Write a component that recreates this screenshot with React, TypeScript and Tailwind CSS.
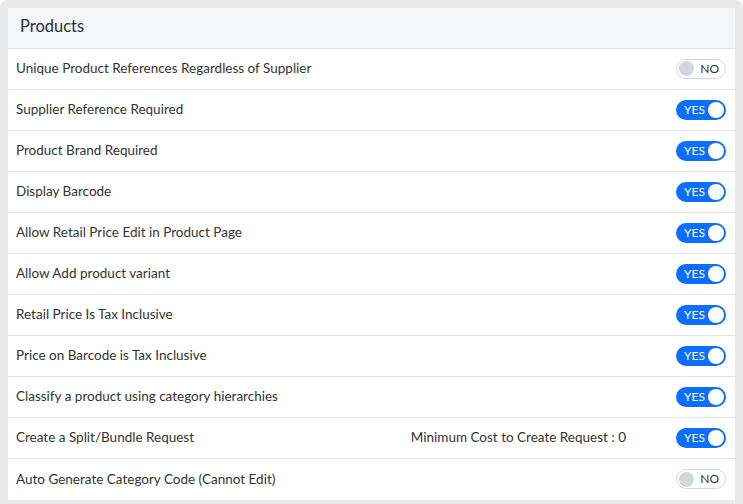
import React from "react";

const rows: { label: string; on: boolean; extra?: string }[] = [
  { label: "Unique Product References Regardless of Supplier", on: false },
  { label: "Supplier Reference Required", on: true },
  { label: "Product Brand Required", on: true },
  { label: "Display Barcode", on: true },
  { label: "Allow Retail Price Edit in Product Page", on: true },
  { label: "Allow Add product variant", on: true },
  { label: "Retail Price Is Tax Inclusive", on: true },
  { label: "Price on Barcode is Tax Inclusive", on: true },
  { label: "Classify a product using category hierarchies", on: true },
  { label: "Create a Split/Bundle Request", on: true, extra: "Minimum Cost to Create Request : 0" },
  { label: "Auto Generate Category Code (Cannot Edit)", on: false },
];

function Toggle({ on }: { on: boolean }) {
  if (on) {
    return (
      <div className="flex h-[20px] w-[50px] items-center justify-between rounded-full bg-[#0d6efd] pl-[8px] pr-[2px]">
        <span className="text-[12px] leading-none text-white">YES</span>
        <span className="h-[16px] w-[16px] rounded-full bg-white" />
      </div>
    );
  }
  return (
    <div className="flex h-[20px] w-[50px] items-center justify-between rounded-full border border-[#d6d8db] bg-white pl-[2px] pr-[6px]">
      <span className="h-[15px] w-[15px] rounded-full bg-[#d3d6da]" />
      <span className="text-[12px] leading-none text-[#333]">NO</span>
    </div>
  );
}

export default function App() {
  return (
    <div
      className="h-[504px] w-[743px] overflow-hidden bg-white"
      style={{ fontFamily: "Lato, 'Noto Sans', sans-serif" }}
    >
      <div className="h-[512px] rounded-[8px] bg-[#e9e9ea] px-[8px] pt-[8px]">
        <div className="flex flex-col overflow-hidden rounded-t-[3px] bg-white">
          <div className="flex h-[41px] items-center border-b border-[#dee0e3] bg-[#f5f6f8] px-[12px] pb-[3px] text-[16.5px] text-[#2b2f36]">
            Products
          </div>
          {rows.map((r, i) => (
            <div
              key={i}
              className={`flex h-[41px] items-center pl-[8px] pr-[9px] pb-[1px] ${i < rows.length - 1 ? "border-b border-[#e3e4e7]" : ""}`}
            >
              <span className="flex-1 text-[13.5px] text-[#333]">{r.label}</span>
              {r.extra && (
                <span className="mr-[50px] text-[13.5px] text-[#333]">{r.extra}</span>
              )}
              <Toggle on={r.on} />
            </div>
          ))}
        </div>
      </div>
    </div>
  );
}
